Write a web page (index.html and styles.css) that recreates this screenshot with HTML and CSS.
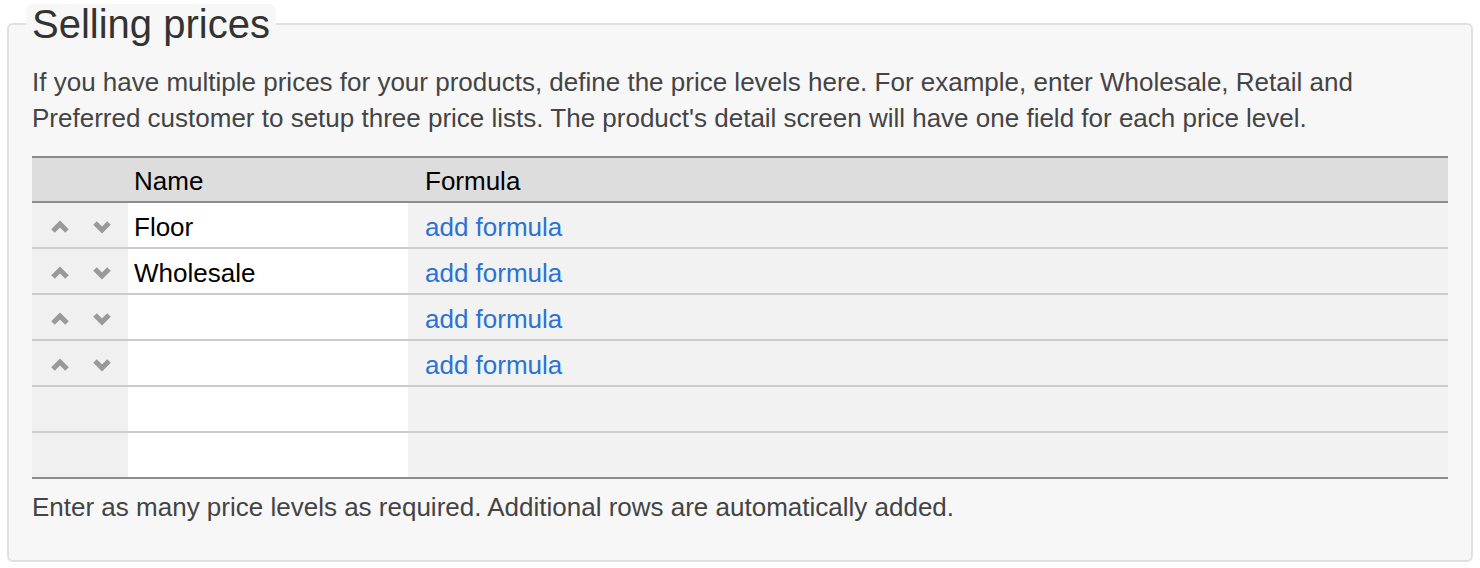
FILE: index.html
```html
<!DOCTYPE html>
<html>
<head>
<meta charset="utf-8">
<link rel="stylesheet" href="styles.css">
</head>
<body>
<fieldset class="panel">
  <legend class="panel-title">Selling prices</legend>
  <p class="intro">If you have multiple prices for your products, define the price levels here. For example, enter Wholesale, Retail and Preferred customer to setup three price lists. The product's detail screen will have one field for each price level.</p>
  <table class="levels">
    <colgroup>
      <col class="c-move">
      <col class="c-name">
      <col class="c-formula">
    </colgroup>
    <thead>
      <tr>
        <th class="col-move"></th>
        <th class="col-name">Name</th>
        <th class="col-formula">Formula</th>
      </tr>
    </thead>
    <tbody>
      <tr>
        <td class="col-move"><span class="mv"><svg class="arrow" viewBox="0 0 20 14" width="20" height="14"><polyline points="3,11 10,4 17,11"/></svg><svg class="arrow" viewBox="0 0 20 14" width="20" height="14"><polyline points="3,3 10,10 17,3"/></svg></span></td>
        <td class="col-name">Floor</td>
        <td class="col-formula"><a class="link" href="#">add formula</a></td>
      </tr>
      <tr>
        <td class="col-move"><span class="mv"><svg class="arrow" viewBox="0 0 20 14" width="20" height="14"><polyline points="3,11 10,4 17,11"/></svg><svg class="arrow" viewBox="0 0 20 14" width="20" height="14"><polyline points="3,3 10,10 17,3"/></svg></span></td>
        <td class="col-name">Wholesale</td>
        <td class="col-formula"><a class="link" href="#">add formula</a></td>
      </tr>
      <tr>
        <td class="col-move"><span class="mv"><svg class="arrow" viewBox="0 0 20 14" width="20" height="14"><polyline points="3,11 10,4 17,11"/></svg><svg class="arrow" viewBox="0 0 20 14" width="20" height="14"><polyline points="3,3 10,10 17,3"/></svg></span></td>
        <td class="col-name"></td>
        <td class="col-formula"><a class="link" href="#">add formula</a></td>
      </tr>
      <tr>
        <td class="col-move"><span class="mv"><svg class="arrow" viewBox="0 0 20 14" width="20" height="14"><polyline points="3,11 10,4 17,11"/></svg><svg class="arrow" viewBox="0 0 20 14" width="20" height="14"><polyline points="3,3 10,10 17,3"/></svg></span></td>
        <td class="col-name"></td>
        <td class="col-formula"><a class="link" href="#">add formula</a></td>
      </tr>
      <tr>
        <td class="col-move"></td>
        <td class="col-name"></td>
        <td class="col-formula"></td>
      </tr>
      <tr class="last">
        <td class="col-move"></td>
        <td class="col-name"></td>
        <td class="col-formula"></td>
      </tr>
    </tbody>
  </table>
  <p class="note">Enter as many price levels as required. Additional rows are automatically added.</p>
</fieldset>
</body>
</html>
```
FILE: styles.css
```css
html, body {
  margin: 0;
  padding: 0;
  background: #ffffff;
}
body {
  font-family: "Liberation Sans", Arial, sans-serif;
  color: #444;
  padding-top: 4px;
}
.panel {
  margin: 0 7px;
  padding: 20px 23px 35px 23px;
  background: #f7f7f7;
  border: 2px solid #e0e0e0;
  border-radius: 6px;
  min-width: 0;
}
.panel-title {
  font-size: 40px;
  line-height: 40px;
  color: #333;
  background: #f7f7f7;
  padding: 0 6px;
  margin-left: -6px;
  border-radius: 6px;
}
.intro {
  margin: 0 0 20px 0;
  font-size: 26px;
  line-height: 36px;
  color: #444;
}
.levels {
  width: 100%;
  table-layout: fixed;
  border-collapse: collapse;
  font-size: 26px;
  line-height: 30px;
  color: #000;
}
.c-move {
  width: 96px;
}
.c-name {
  width: 280px;
}
.levels th {
  background: #dddddd;
  font-weight: normal;
  text-align: left;
  height: 40px;
  padding: 3px 0 0 0;
  border-top: 2px solid #8c8c8c;
  border-bottom: 2px solid #8c8c8c;
  vertical-align: middle;
}
.levels td {
  height: 40px;
  padding: 4px 0 0 0;
  border-bottom: 2px solid #cccccc;
  vertical-align: middle;
}
.levels tr.last td {
  border-bottom: 2px solid #8c8c8c;
}
.levels td.col-move {
  background: #f0f0f0;
}
.levels .col-name {
  padding-left: 6px;
}
.levels td.col-name {
  background: #ffffff;
}
.levels .col-formula {
  padding-left: 17px;
}
.levels td.col-formula {
  background: #f2f2f2;
}
.mv {
  display: flex;
  gap: 22px;
  padding-left: 18px;
  align-items: center;
}
.arrow {
  display: block;
  flex-shrink: 0;
  fill: none;
  stroke: #999999;
  stroke-width: 5;
  stroke-linecap: butt;
  stroke-linejoin: miter;
}
.link {
  color: #2a72d4;
  text-decoration: none;
}
.note {
  margin: 10px 0 0 0;
  font-size: 26px;
  line-height: 36px;
  color: #444;
}
```
